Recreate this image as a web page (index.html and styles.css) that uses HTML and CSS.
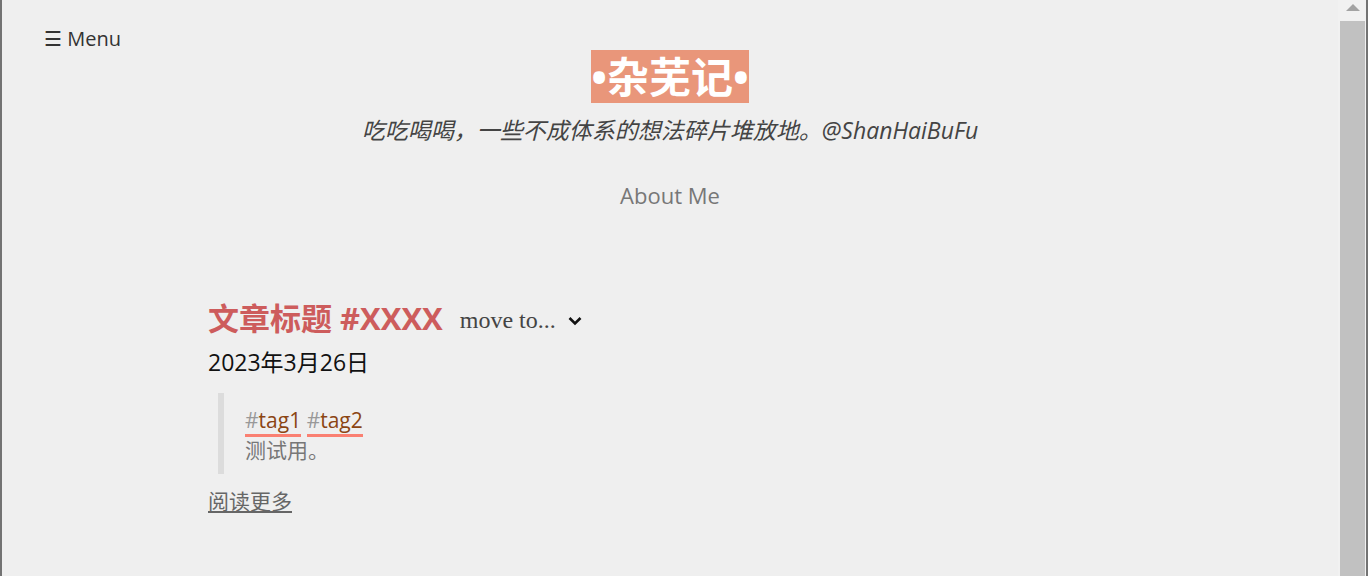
FILE: index.html
```html
<!DOCTYPE html>
<html lang="zh-CN">
<head>
<meta charset="utf-8">
<title>杂芜记</title>
<link rel="stylesheet" href="styles.css">
</head>
<body>
<div class="frame">
  <div class="page">
    <div class="menu-bar"><span class="menu">☰ Menu</span></div>
    <header class="site-header">
      <h1 class="site-title">•杂芜记•</h1>
      <p class="site-desc">吃吃喝喝，一些不成体系的想法碎片堆放地。@ShanHaiBuFu</p>
      <nav class="site-nav"><a href="#">About Me</a></nav>
    </header>
    <main class="posts">
      <article class="post">
        <div class="post-head">
          <h2 class="post-title">文章标题 #XXXX</h2>
          <div class="move-to">
            <span>move to...</span>
            <svg class="chev" width="14" height="10" viewBox="0 0 14 10"><path d="M1.5 2 L7 7.5 L12.5 2" fill="none" stroke="#111" stroke-width="2.6"/></svg>
          </div>
        </div>
        <div class="post-date">2023年3月26日</div>
        <blockquote class="post-quote">
          <div class="tags"><a class="tag" href="#"><span class="hash">#</span>tag1</a> <a class="tag" href="#"><span class="hash">#</span>tag2</a></div>
          <div class="excerpt">测试用。</div>
        </blockquote>
        <a class="read-more" href="#">阅读更多</a>
      </article>
    </main>
  </div>
  <div class="scrollbar">
    <div class="sb-arrow"></div>
    <div class="sb-thumb"></div>
  </div>
</div>
</body>
</html>
```
FILE: styles.css
```css
html, body {
  margin: 0;
  padding: 0;
  height: 576px;
  overflow: hidden;
}
body {
  background: #efefef;
  font-family: "Open Sans", "Noto Sans CJK SC", sans-serif;
  color: #333;
}
.frame {
  display: flex;
  height: 576px;
  border-left: 2px solid #737373;
  border-right: 2px solid #737373;
  box-sizing: border-box;
}
.page {
  flex: 1;
  min-width: 0;
}
.menu-bar {
  padding: 28px 0 0 42px;
  height: 22px;
}
.menu {
  font-size: 20px;
  line-height: 22px;
  color: #333;
}
.site-header {
  text-align: center;
}
.site-title {
  display: inline-block;
  margin: 0;
  background: #e9967a;
  color: #fff;
  font-size: 42px;
  font-weight: 700;
  line-height: 53px;
  height: 53px;
}
.site-desc {
  margin: 11px 0 0;
  font-size: 23px;
  line-height: 32px;
  font-style: italic;
  color: #444;
}
.site-nav {
  margin-top: 34px;
  font-size: 22px;
  line-height: 30px;
}
.site-nav a {
  color: #777;
  text-decoration: none;
}
.posts {
  padding: 88px 0 0 206px;
}
.post-head {
  display: flex;
  align-items: center;
  gap: 17px;
  height: 40px;
}
.post-title {
  margin: 0;
  font-size: 31px;
  line-height: 40px;
  font-weight: 700;
  color: #cd5c5c;
}
.move-to {
  display: flex;
  align-items: center;
  gap: 12px;
  font-family: "Liberation Serif", serif;
  font-size: 24px;
  color: #444;
  padding-top: 4px;
}
.chev {
  margin-top: 2px;
}
.post-date {
  margin-top: 9px;
  font-size: 23px;
  line-height: 30px;
  color: #111;
}
.post-quote {
  margin: 16px 0 0 10px;
  border-left: 6px solid #dcdcdc;
  padding: 12px 0 9px 21px;
}
.tags {
  font-size: 21px;
  line-height: 30px;
}
.tag {
  color: #8b4513;
  text-decoration: none;
  border-bottom: 3px solid #fa8072;
  padding-bottom: 0;
}
.hash {
  color: #999;
}
.excerpt {
  font-size: 21px;
  line-height: 30px;
  color: #777;
}
.read-more {
  display: inline-block;
  margin-top: 12px;
  font-size: 21px;
  line-height: 30px;
  color: #666;
}
.scrollbar {
  width: 28px;
  background: #f1f1f1;
  display: flex;
  flex-direction: column;
  align-items: flex-start;
}
.sb-arrow {
  width: 0;
  height: 0;
  margin: 4px 0 10px 8px;
  border-left: 7px solid transparent;
  border-right: 7px solid transparent;
  border-bottom: 7px solid #a3a3a3;
}
.sb-thumb {
  flex: 1;
  width: 25px;
  margin-left: 2px;
  background: #c1c1c1;
}
```
